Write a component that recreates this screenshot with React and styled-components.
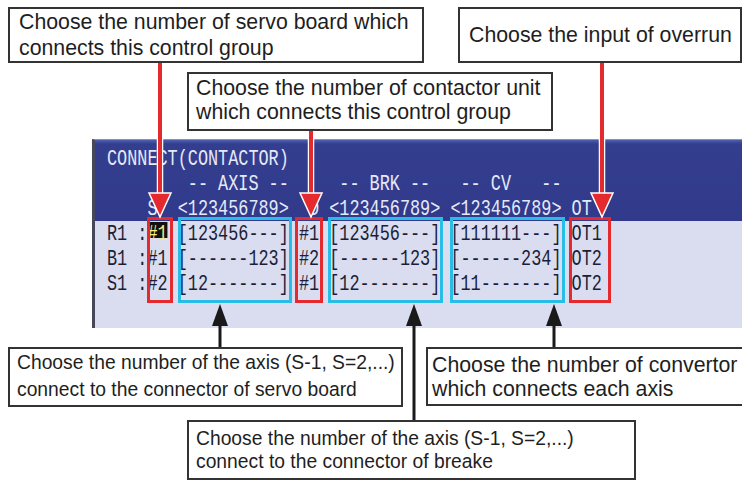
import styled, { createGlobalStyle } from "styled-components";

const GlobalStyle = createGlobalStyle`
  html, body { margin: 0; padding: 0; background: #fff; }
  body { font-family: "Liberation Sans", Arial, sans-serif; }
`;

const Canvas = styled.div`
  position: relative;
  width: 742px;
  height: 482px;
  overflow: hidden;
  background: #fff;
`;

const Row = styled.div`
  display: flex;
  align-items: flex-start;
  gap: ${p => p.$gap || 0}px;
  margin-top: ${p => p.$mt || 0}px;
  padding-left: ${p => p.$pl || 0}px;
`;

const Callout = styled.div`
  box-sizing: border-box;
  flex: none;
  width: ${p => p.$w}px;
  height: ${p => p.$h}px;
  padding: ${p => p.$pt || 0}px 0 0 ${p => p.$pl}px;
  border: 2px solid #333;
  background: #fff;
  color: #1e1e1e;
  font-size: ${p => p.$size}px;
  line-height: ${p => p.$lh}px;
  white-space: nowrap;
  ${p => p.$center && "display: flex; align-items: center;"}
`;

const Screen = styled.div`
  margin: 8px 0 0 92px;
  width: 660px;
  border-left: 3px solid #46485a;
  border-top: 1px solid #8e9a86;
`;

const ScreenHead = styled.div`
  box-sizing: border-box;
  height: 81px;
  padding: 7px 0 0 12px;
  background: linear-gradient(#4d5fae, #343e8f 4px, #313a8a);
`;

const ScreenBody = styled.div`
  box-sizing: border-box;
  height: 107px;
  padding: 1px 0 0 12px;
  background: #d9ddef;
`;

const Line = styled.div`
  height: 25px;
  line-height: 25px;
  font-family: "Liberation Mono", "DejaVu Sans Mono", monospace;
  font-size: 22px;
  white-space: pre;
  transform: scaleX(0.765);
  transform-origin: 0 50%;
  color: ${p => (p.$light ? "#e6e9f8" : "#1d1d38")};
`;

const Cursor = styled.span`
  color: #f6ea84;
  background: linear-gradient(#111 0, #111 16px, transparent 16px);
`;

const Overlay = styled.svg`
  position: absolute;
  left: 0;
  top: 0;
  pointer-events: none;
`;

const RED = "#e42a2e";
const CYAN = "#27bde6";

const RedArrow = ({ x, y1, y2 }) => (
  <g>
    <line x1={x} y1={y1} x2={x} y2={y2 - 20} stroke="#fff" strokeWidth="6.5" />
    <line x1={x} y1={y1} x2={x} y2={y2 - 20} stroke={RED} strokeWidth="4" />
    <polygon
      points={`${x - 11},${y2 - 24} ${x + 11},${y2 - 24} ${x},${y2}`}
      fill={RED}
      stroke="#fff"
      strokeWidth="1.5"
    />
  </g>
);

const BlackArrow = ({ x, y1, y2 }) => (
  <g>
    <line x1={x} y1={y1 + 18} x2={x} y2={y2} stroke="#1a1a1a" strokeWidth="3" />
    <polygon points={`${x},${y1} ${x - 8},${y1 + 22} ${x + 8},${y1 + 22}`} fill="#1a1a1a" />
  </g>
);

const Mark = ({ x1, x2, color }) => (
  <rect x={x1 + 1.5} y={218.5} width={x2 - x1 - 3} height={83} fill="none" stroke={color} strokeWidth="3" />
);

const rows = [
  ["R1 :", "#1", " [123456---] #1 [123456---] [111111---] OT1"],
  ["B1 :#1 [------123] #2 [------123] [------234] OT2"],
  ["S1 :#2 [12-------] #1 [12-------] [11-------] OT2"],
];

export default function App() {
  return (
    <Canvas>
      <GlobalStyle />

      <Row $mt={7} $pl={8} $gap={34}>
        <Callout $w={416} $h={56} $pl={9} $size={21.3} $lh={26}>
          Choose the number of servo board which
          <br />
          connects this control group
        </Callout>
        <Callout $w={284} $h={56} $pl={9} $size={21.3} $lh={26} $center>
          Choose the input of overrun
        </Callout>
      </Row>
      <Row $mt={9} $pl={187}>
        <Callout $w={366} $h={59} $pt={3} $pl={7} $size={21.3} $lh={23.5}>
          Choose the number of contactor unit
          <br />
          which connects this control group
        </Callout>
      </Row>

      <Screen>
        <ScreenHead>
          <Line $light>CONNECT(CONTACTOR)</Line>
          <Line $light>{"        -- AXIS --     -- BRK --   -- CV   --"}</Line>
          <Line $light>{"    S  <123456789>  D <123456789> <123456789> OT"}</Line>
        </ScreenHead>
        <ScreenBody>
          {rows.map((r, i) => (
            <Line key={i}>
              {r.length === 3 ? (
                <>
                  {r[0]}
                  <Cursor>{r[1]}</Cursor>
                  {r[2]}
                </>
              ) : (
                r[0]
              )}
            </Line>
          ))}
        </ScreenBody>
      </Screen>

      <Row $mt={19} $pl={8} $gap={23}>
        <Callout $w={395} $h={60} $pl={7} $size={19.3} $lh={27}>
          Choose the number of the axis (S-1, S=2,...)
          <br />
          connect to the connector of servo board
        </Callout>
        <Callout $w={318} $h={59} $pt={5} $pl={4} $size={21.3} $lh={23.5}>
          Choose the number of convertor
          <br />
          which connects each axis
        </Callout>
      </Row>
      <Row $mt={13} $pl={187}>
        <Callout $w={449} $h={60} $pt={5} $pl={7} $size={19.3} $lh={23.3}>
          Choose the number of the axis (S-1, S=2,...)
          <br />
          connect to the connector of breake
        </Callout>
      </Row>

      <Overlay width="742" height="482" viewBox="0 0 742 482">
        <Mark x1={147} x2={173} color={RED} />
        <Mark x1={178} x2={292} color={CYAN} />
        <Mark x1={295} x2={323} color={RED} />
        <Mark x1={328} x2={443} color={CYAN} />
        <Mark x1={450} x2={565} color={CYAN} />
        <Mark x1={569} x2={611} color={RED} />

        <RedArrow x={160} y1={63} y2={217} />
        <RedArrow x={311} y1={131} y2={217} />
        <RedArrow x={602} y1={63} y2={217} />

        <BlackArrow x={220} y1={304} y2={347} />
        <BlackArrow x={414} y1={304} y2={420} />
        <BlackArrow x={554} y1={304} y2={347} />
      </Overlay>
    </Canvas>
  );
}
